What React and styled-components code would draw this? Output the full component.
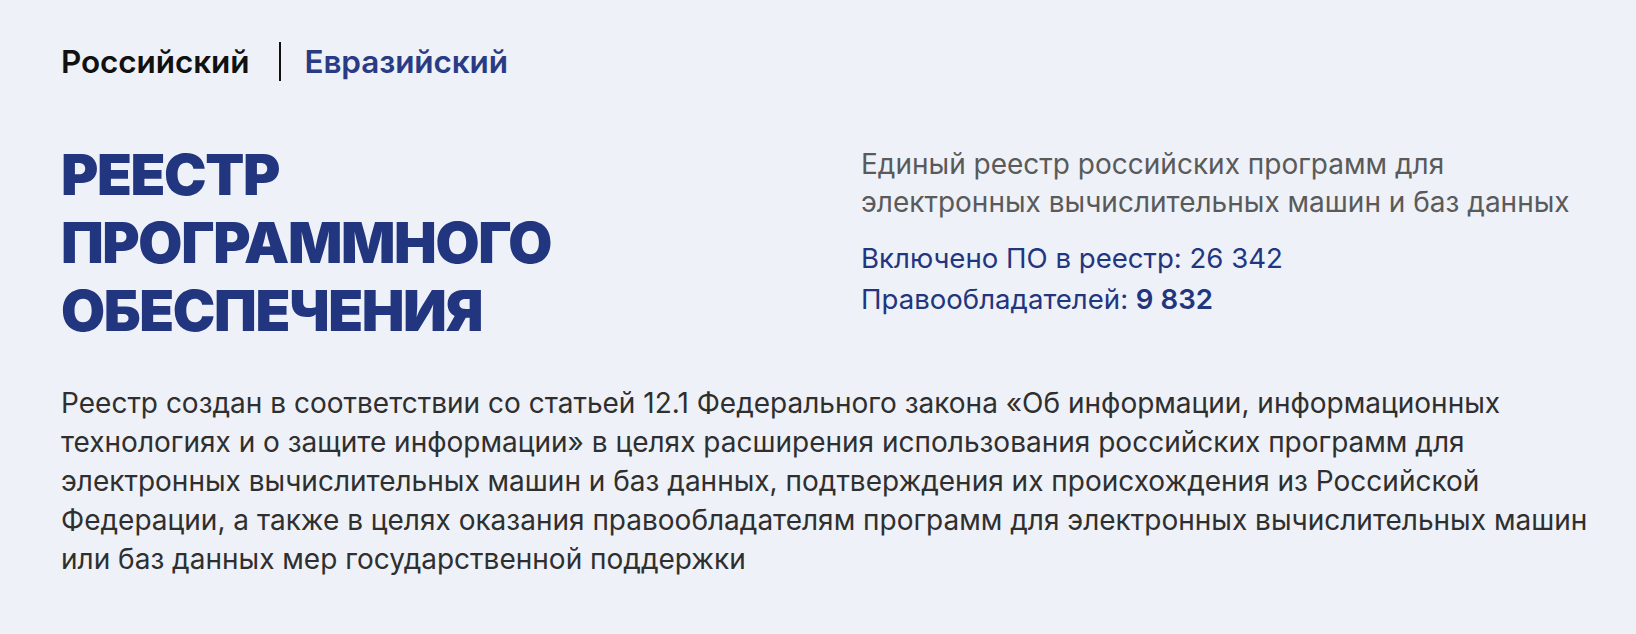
import React from "react";
import styled, { createGlobalStyle } from "styled-components";

const Global = createGlobalStyle`
  html, body { margin: 0; padding: 0; background: #eef1f7; }
  body { font-family: Inter, "Noto Sans", sans-serif; -webkit-font-smoothing: antialiased; }
  * { box-sizing: border-box; }
`;

const Page = styled.main`
  min-height: 634px;
  background: #eef1f7;
  padding: 42px 61px 0 61px;
`;

const Tabs = styled.nav`
  display: flex;
  align-items: center;
  height: 39px;
`;

const Tab = styled.a`
  font-size: 31.5px;
  font-weight: 600;
  letter-spacing: -0.1px;
  color: ${(p) => (p.$active ? "#111111" : "#2a3b86")};
  text-decoration: none;
  line-height: 1;
`;

const Divider = styled.span`
  width: 2px;
  align-self: stretch;
  background: #111;
  margin: 0 23px 0 30px;
`;

const Header = styled.section`
  display: grid;
  grid-template-columns: 800px 1fr;
  margin-top: 60px;
`;

const Title = styled.h1`
  margin: 0;
  font-size: 57px;
  font-weight: 900;
  line-height: 68px;
  color: #22357f;
  text-transform: uppercase;
  letter-spacing: -1.4px;
`;

const Info = styled.div`
  display: flex;
  flex-direction: column;
  padding-top: 4px;
`;

const Lead = styled.p`
  margin: 0;
  font-size: 28px;
  line-height: 38px;
  color: #5a5a5a;
`;

const Stats = styled.div`
  margin-top: 18px;
  display: flex;
  flex-direction: column;
  gap: 3px;
`;

const Stat = styled.div`
  font-size: 27.6px;
  line-height: 38px;
  color: #22357f;
  b { font-weight: 600; }
`;

const Body = styled.p`
  margin: 39px 0 0 0;
  font-size: 28px;
  line-height: 39px;
  color: #2f2f2f;
  white-space: nowrap;
`;

const lines = [
  "Реестр создан в соответствии со статьей 12.1 Федерального закона «Об информации, информационных",
  "технологиях и о защите информации» в целях расширения использования российских программ для",
  "электронных вычислительных машин и баз данных, подтверждения их происхождения из Российской",
  "Федерации, а также в целях оказания правообладателям программ для электронных вычислительных машин",
  "или баз данных мер государственной поддержки",
];

export default function App() {
  return (
    <>
      <Global />
      <Page>
        <Tabs>
          <Tab $active href="#">Российский</Tab>
          <Divider />
          <Tab href="#">Евразийский</Tab>
        </Tabs>
        <Header>
          <Title>
            Реестр
            <br />
            программного
            <br />
            обеспечения
          </Title>
          <Info>
            <Lead>
              Единый реестр российских программ для
              <br />
              электронных вычислительных машин и баз данных
            </Lead>
            <Stats>
              <Stat>Включено ПО в реестр: 26 342</Stat>
              <Stat>
                Правообладателей: <b>9 832</b>
              </Stat>
            </Stats>
          </Info>
        </Header>
        <Body>
          {lines.map((l, i) => (
            <React.Fragment key={i}>
              {l}
              {i < lines.length - 1 && <br />}
            </React.Fragment>
          ))}
        </Body>
      </Page>
    </>
  );
}
